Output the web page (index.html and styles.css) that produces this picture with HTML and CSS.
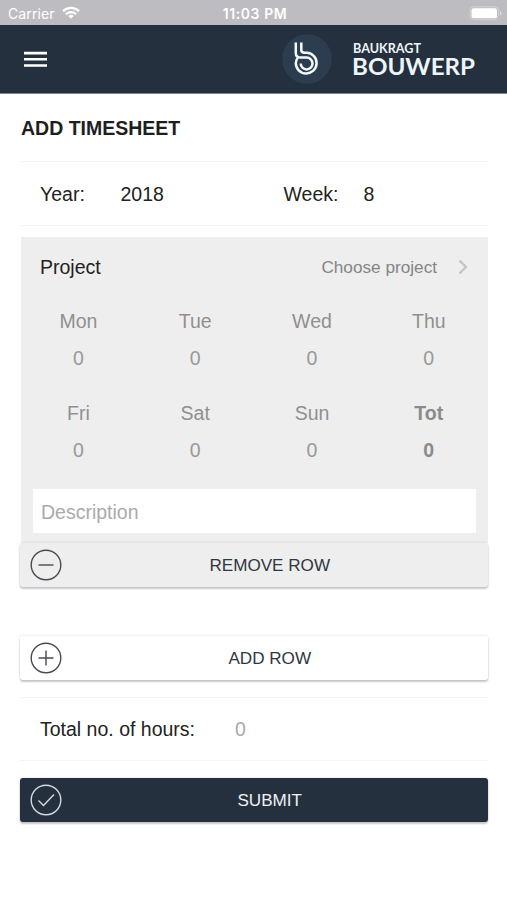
FILE: index.html
```html
<!DOCTYPE html>
<html lang="en">
<head>
<meta charset="utf-8">
<title>Add timesheet</title>
<link rel="stylesheet" href="styles.css">
</head>
<body>
<div class="status">
  <div class="carrier">
    <span>Carrier</span>
    <svg width="18" height="14" viewBox="0 0 18 14" fill="none" stroke="#fff" stroke-width="2.3"><path d="M1 5.2a11.3 11.3 0 0 1 16 0M3.9 8.3a7.2 7.2 0 0 1 10.2 0"/><path d="M9 12.6 6.2 10a4 4 0 0 1 5.6 0z" fill="#fff" stroke="none"/></svg>
  </div>
  <span class="clock">11:03 PM</span>
  <svg class="battery" width="33" height="15" viewBox="0 0 33 15"><rect x="1" y=".8" width="28.5" height="13" rx="3.5" fill="none" stroke="#d3d2d6" stroke-width="1"/><rect x="2.5" y="2.3" width="25.5" height="10" rx="2" fill="#fff"/><path d="M31 5v4.600q1.500-.8 1.500-2.300T31 5z" fill="#dedde0"/></svg>
</div>
<header class="header">
  <svg class="menu" width="23" height="17" viewBox="0 0 23 17" fill="#fff"><path d="M0 .8h23v2.600H0zM0 7h23v2.600H0zM0 13.200h23v2.600H0z"/></svg>
  <div class="brand">
    <svg class="mark" width="50" height="50" viewBox="0 0 50 50"><circle cx="25" cy="25" r="24.800" fill="#2b3d4f"/><g fill="none" stroke="#f2f8fc" stroke-width="2.500"><path d="M13.800 8.500v10.500c0 3 2.200 4.600 5.200 4.600h5.600a5.900 5.900 0 1 1-5.900 5.900"/><path d="M19.300 8.500v7.500c0 2 1.200 2.700 3.200 2.700h2.300a10.400 10.400 0 1 1-11 10.300c0-2.400.9-4.200 2.400-5.600"/></g></svg>
    <svg class="wordmark" width="124" height="40" viewBox="0 0 124 40" fill="#eef5fa"><text class="word-top" x="0" y="13.500" textLength="68" lengthAdjust="spacingAndGlyphs">BAUKRAGT</text><text class="word-main" x="-1" y="35.500" textLength="123" lengthAdjust="spacingAndGlyphs">BOUWERP</text></svg>
  </div>
</header>
<main class="page">
  <h1 class="title">ADD TIMESHEET</h1>
  <div class="row period">
    <span class="year-label">Year:</span><span class="year">2018</span>
    <span class="week-label">Week:</span><span>8</span>
  </div>
  <section class="panel">
    <div class="project">
      <span>Project</span>
      <span class="choose">Choose project<svg width="10" height="16" viewBox="0 0 10 16" fill="none" stroke="#c4c4c6" stroke-width="2.300"><path d="m1.500 1.500 6.500 6.500-6.500 6.500"/></svg></span>
    </div>
    <div class="days">
      <div class="day"><span>Mon</span><span class="value">0</span></div>
      <div class="day"><span>Tue</span><span class="value">0</span></div>
      <div class="day"><span>Wed</span><span class="value">0</span></div>
      <div class="day"><span>Thu</span><span class="value">0</span></div>
      <div class="day"><span>Fri</span><span class="value">0</span></div>
      <div class="day"><span>Sat</span><span class="value">0</span></div>
      <div class="day"><span>Sun</span><span class="value">0</span></div>
      <div class="day total"><span>Tot</span><span class="value">0</span></div>
    </div>
    <div class="description">Description</div>
  </section>
  <button class="button remove"><svg width="32" height="32" viewBox="0 0 32 32"><circle cx="16" cy="16" r="14.800"/><path d="M8.500 16h15"/></svg><span>REMOVE ROW</span></button>
  <button class="button add"><svg width="32" height="32" viewBox="0 0 32 32"><circle cx="16" cy="16" r="14.800"/><path d="M8.500 16h15M16 8.500v15"/></svg><span>ADD ROW</span></button>
  <div class="row hours"><span>Total no. of hours:</span><span class="sum">0</span></div>
  <button class="button submit"><svg width="32" height="32" viewBox="0 0 32 32"><circle cx="16" cy="16" r="14.800"/><path d="m8.500 16.500 5 5 10.500-11"/></svg><span>SUBMIT</span></button>
</main>
</body>
</html>
```
FILE: styles.css
```css
* { box-sizing: border-box; }
body {
  margin: 0;
  height: 900px;
  background: #fff;
  color: #222;
  font: 19.5px/24px "Liberation Sans", Arial, sans-serif;
}
svg { display: block; flex: none; }
.status {
  display: grid;
  grid-template-columns: 1fr auto 1fr;
  align-items: center;
  height: 25px;
  padding: 2px 5px 0 8px;
  background: #bdbcc1;
  color: #fff;
  font: 14px/22px Inter, sans-serif;
}
.carrier { display: flex; align-items: center; gap: 7px; letter-spacing: .1px; }
.carrier svg { margin-top: -2px; }
.clock { font-weight: 600; font-size: 14px; letter-spacing: .6px; }
.battery { justify-self: end; margin-top: -1px; }
.header {
  display: flex;
  justify-content: space-between;
  align-items: center;
  height: 69px;
  padding: 0 30px 0 24px;
  background: #25303e;
  border-bottom: 1px solid #7c838b;
}
.brand { display: flex; align-items: center; gap: 21px; }
.wordmark { overflow: visible; }
.word-top { font: 700 12.3px Lato, sans-serif; }
.word-main { font: 700 23.5px Lato, sans-serif; }
.page { padding: 0 19px 0 20px; }
.title { margin: 0; padding: 22px 1px 21px; font-size: 19.5px; line-height: 24px; color: #1e1e1e; }
.row {
  display: flex;
  align-items: center;
  height: 65px;
  padding: 0 20px;
  border: solid #f4f4f4;
  border-width: 1px 0;
}
.year-label { width: 80.5px; }
.year { width: 163px; }
.week-label { width: 80px; }
.panel { margin: 11px 0 0 1px; height: 306px; background: #eee; }
.project { display: flex; justify-content: space-between; padding: 18px 20px 0 19px; }
.choose { display: flex; align-items: center; gap: 21px; color: #858585; font-size: 17.2px; }
.days {
  display: grid;
  grid-template-columns: repeat(4, 116.8px);
  row-gap: 31px;
  margin: 30px 0 0 -1px;
  color: #909090;
  text-align: center;
}
.day { display: flex; flex-direction: column; gap: 13px; }
.value { color: #999; }
.total, .total .value { font-weight: bold; color: #8b8b8b; }
.description {
  height: 44px;
  margin: 27px 12px 0;
  padding: 0 9px 0 8px;
  background: #fff;
  color: #aaa;
  line-height: 46px;
}
.button {
  display: flex;
  align-items: center;
  width: 100%;
  height: 44px;
  padding: 0 10px 0 9.5px;
  border: 0;
  border-radius: 3px;
  box-shadow: 0 2px 2px rgba(0, 0, 0, .2), 0 0 3px rgba(0, 0, 0, .12);
  background: #fff;
  color: #303641;
  font: 17.1px/24px "Liberation Sans", Arial, sans-serif;
}
.button span { flex: 1; padding-top: 1px; text-align: center; }
.button svg { fill: none; stroke: #484b50; stroke-width: 1.4; }
.remove { background: #eee; }
.add { margin: 49px 0 17px; }
.hours { height: 64px; }
.sum { margin-left: 40px; color: #aaa; }
.submit { margin-top: 17px; background: #25303e; color: #eef1f5; }
.submit svg { stroke: #d5dae1; }
```
